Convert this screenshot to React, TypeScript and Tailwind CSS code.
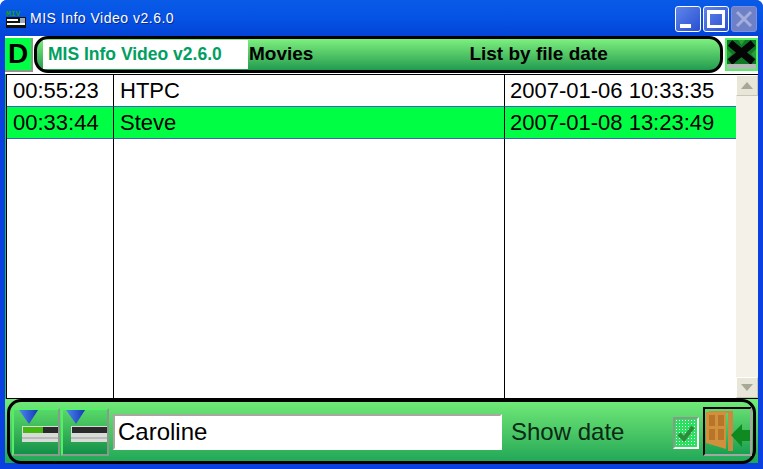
const font = { fontFamily: '"Liberation Sans", Arial, sans-serif' };

function AppIcon() {
  return (
    <svg width="22" height="20" viewBox="0 0 22 20" className="shrink-0">
      <text x="0" y="8" fontSize="8" fontWeight="700" fill="#1f9a1f" fontFamily="Liberation Mono, monospace">MIV</text>
      <rect x="0" y="9" width="20" height="11" fill="#111" />
      <rect x="1" y="11" width="11" height="2" fill="#fff" />
      <rect x="1" y="15" width="18" height="2" fill="#fff" />
      <rect x="14" y="10" width="5" height="5" fill="#9ab" />
    </svg>
  );
}

function WinBtn({ kind }: { kind: "min" | "max" | "close" }) {
  if (kind === "close") {
    return (
      <div className="w-[26px] h-[26px] rounded-[3px] bg-[#6d80c8] border border-[#7f90d4] flex items-center justify-center">
        <svg width="18" height="18" viewBox="0 0 18 18">
          <path d="M2 2 L16 16 M16 2 L2 16" stroke="#a3aedb" strokeWidth="3" />
        </svg>
      </div>
    );
  }
  return (
    <div className="w-[26px] h-[26px] rounded-[3px] bg-gradient-to-br from-[#5f85ea] to-[#2a4fd0] border border-white flex items-center justify-center relative">
      {kind === "min" ? (
        <div className="absolute left-[4px] bottom-[3px] w-[11px] h-[4px] bg-white" />
      ) : (
        <div className="w-[18px] h-[18px] border-[3px] border-white border-t-[4px]" />
      )}
    </div>
  );
}

function Deck({ tri, lit }: { tri: number; lit: boolean }) {
  return (
    <div className="w-[48px] h-[48px] border-2 border-[#55ee66] border-r-[#8a9a8a] border-b-[#8a9a8a] bg-gradient-to-b from-[#58d868] to-[#0f9148] relative overflow-hidden">
      <svg width="44" height="44" viewBox="0 0 44 44" className="absolute left-0 top-0">
        <defs>
          <linearGradient id="tri" x1="0" y1="0" x2="1" y2="0">
            <stop offset="0" stopColor="#4f86ee" />
            <stop offset="1" stopColor="#1238b8" />
          </linearGradient>
        </defs>
        <polygon points={`${tri - 10},0 ${tri + 9},0 ${tri},14`} fill="url(#tri)" />
        <rect x="8" y="16" width="36" height="16" fill="#d8dcd8" />
        <rect x="9" y="17" width="35" height="6" fill="#2a2a2a" />
        {lit && <rect x="9" y="17" width="20" height="6" fill="#45b810" />}
        <rect x="8" y="27" width="36" height="2" fill="#b8bcb8" />
      </svg>
    </div>
  );
}

function Row({ a, b, c, sel }: { a: string; b: string; c: string; sel?: boolean }) {
  const base = "h-[32px] flex items-center border-b border-[#3a63c8] ";
  return (
    <div className={`flex text-[22px] leading-none text-black ${sel ? "bg-[#00ff44]" : "bg-white"}`}>
      <div className={base + "w-[107px] pl-[6px] border-r-black border-r"}>{a}</div>
      <div className={base + "w-[391px] pl-[6px] border-r-black border-r"}>{b}</div>
      <div className={base + "flex-1 pl-[5px]"}>{c}</div>
    </div>
  );
}

export default function App() {
  return (
    <div style={font} className="w-[763px] h-[469px] overflow-hidden flex flex-col bg-[#0a3fe0] rounded-t-[7px]">
      <div className="h-[36px] shrink-0 flex items-center pl-[6px] pr-[6px] bg-gradient-to-b from-[#0a5ae8] via-[#0553e4] to-[#0444d8]">
        <AppIcon />
        <span className="ml-[2px] text-white font-normal text-[14px] tracking-[0.5px] [text-shadow:1px_1px_0_#0a2a90]">MIS Info Video v2.6.0</span>
        <div className="ml-auto flex gap-[2px] mt-[2px]">
          <WinBtn kind="min" />
          <WinBtn kind="max" />
          <WinBtn kind="close" />
        </div>
      </div>

      <div className="flex-1 mx-[5px] mb-[6px] bg-[#2cb45e] flex flex-col min-h-0">
        <div className="h-[37px] shrink-0 flex items-center bg-white">
          <div className="w-[28px] h-[34px] bg-[#00ff44] border-r-2 border-b-2 border-[#8a9a8a] flex items-center justify-center text-[28px] font-bold text-black">D</div>
          <div className="ml-[1px] w-[689px] h-[37px] border-[3px] border-black rounded-[14px] bg-gradient-to-b from-[#7cf07e] to-[#1f9c50] flex items-center overflow-hidden">
            <div className="ml-[6px] w-[205px] h-[29px] bg-white text-[#00a060] font-bold text-[17.5px] flex items-center pl-[5px] whitespace-nowrap">MIS Info Video v2.6.0</div>
            <span className="ml-[1px] font-bold text-[19px] text-black">Movies</span>
            <span className="ml-[156px] font-bold text-[19px] text-black">List by file date</span>
          </div>
          <div className="ml-[2px] w-[33px] h-[33px] border-2 border-[#55ee66] bg-[#111] overflow-hidden">
            <svg width="29" height="29" viewBox="0 0 29 29">
              <rect width="29" height="29" fill="#2d9c3a" />
              <polygon points="0,0 11,0 14.5,5 18,0 29,0 29,9 24,14 29,19 29,24 0,24 0,19 5,14 0,9" fill="#0f7a25" />
              <path d="M3 3 L26 22 M26 3 L3 22" stroke="#050505" strokeWidth="7" />
              <rect x="0" y="24" width="29" height="5" fill="#b5b9b5" />
            </svg>
          </div>
        </div>

        <div className="h-[1px] shrink-0 bg-white" />
        <div className="h-[325px] shrink-0 flex bg-white border border-black border-r-0 ml-[1px]">
          <div className="relative flex-1 min-w-0">
            <Row a="00:55:23" b="HTPC" c="2007-01-06 10:33:35" />
            <Row a="00:33:44" b="Steve" c="2007-01-08 13:23:49" sel />
            <div className="flex h-[259px]">
              <div className="w-[107px] border-r border-black" />
              <div className="w-[391px] border-r border-black" />
            </div>
          </div>
          <div className="w-[22px] shrink-0 bg-[#f4f2e8] flex flex-col justify-between">
            <div className="h-[21px] bg-[#e8e6d8] border border-white border-r-[#c8c6b4] border-b-[#c8c6b4] flex items-center justify-center">
              <svg width="12" height="7" viewBox="0 0 12 7"><polygon points="6,0 12,7 0,7" fill="#a8a896" /></svg>
            </div>
            <div className="h-[21px] bg-[#e8e6d8] border border-white border-r-[#c8c6b4] border-b-[#c8c6b4] flex items-center justify-center">
              <svg width="12" height="7" viewBox="0 0 12 7"><polygon points="0,0 12,0 6,7" fill="#a8a896" /></svg>
            </div>
          </div>
        </div>

        <div className="flex-1 min-h-0 bg-gradient-to-b from-[#72ec78] to-[#1ca656] pl-[2px] pr-[2px]">
          <div className="h-[65px] border-[3px] border-black rounded-[14px] flex items-center pl-[2px]">
            <Deck tri={15} lit />
            <div className="w-[1px]" />
            <Deck tri={13} lit={false} />
            <div className="ml-[4px] w-[389px] h-[36px] bg-white border-2 border-[#a8a8a0] border-r-white border-b-white text-[24px] leading-none text-black flex items-center pl-[3px]">Caroline</div>
            <span className="ml-[9px] text-[24px] leading-none text-[#0a2a14] whitespace-nowrap">Show date</span>
            <div className="ml-[49px] mt-[2px] w-[26px] h-[32px] border-2 border-[#8a9a8a] border-r-white border-b-white bg-[radial-gradient(#ffffff_1px,#2be060_1px)] bg-[length:3px_3px] flex items-center justify-center">
              <svg width="20" height="20" viewBox="0 0 20 20">
                <path d="M3 11 L8 16 L17 4" fill="none" stroke="#2f8a3a" strokeWidth="4" />
              </svg>
            </div>
            <div className="ml-[4px] w-[49px] h-[49px] border-[2px] border-black border-r-[#a0a8a0] border-b-[#a0a8a0] bg-gradient-to-b from-[#60dc70] to-[#16a050] overflow-hidden">
              <svg width="45" height="45" viewBox="0 0 45 45">
                <rect x="23" y="2" width="5" height="40" fill="#c88a40" />
                <rect x="4" y="2" width="24" height="2" fill="#c88a40" />
                <polygon points="1,3 21,3 21,40 1,34" fill="#d0903c" />
                <rect x="4" y="6" width="6" height="11" fill="#b87428" />
                <rect x="13" y="6" width="6" height="11" fill="#b87428" />
                <rect x="4" y="20" width="6" height="11" fill="#b87428" />
                <rect x="13" y="20" width="6" height="11" fill="#b87428" />
                <polygon points="26,26 37,15 37,21 45,21 45,32 37,32 37,38" fill="#0f8a20" />
              </svg>
            </div>
          </div>
        </div>
      </div>
    </div>
  );
}
